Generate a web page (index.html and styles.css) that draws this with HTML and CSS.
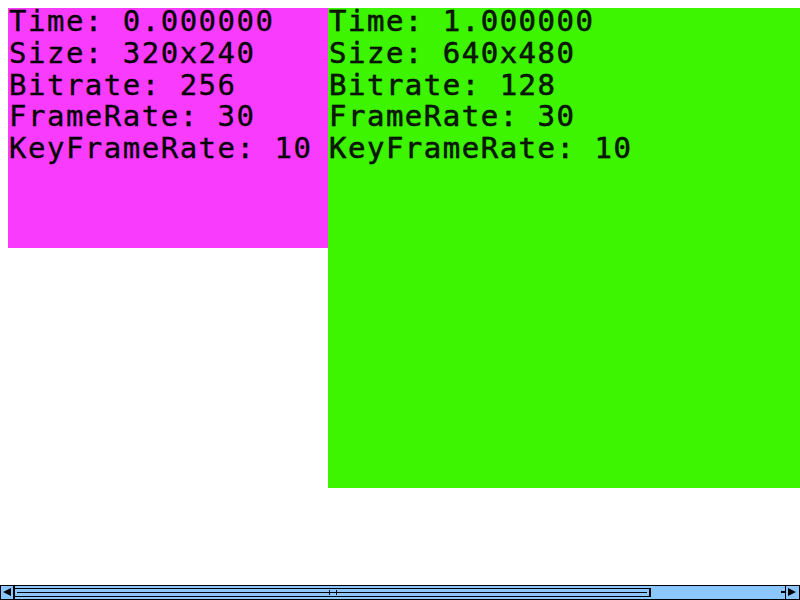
FILE: index.html
```html
<!DOCTYPE html>
<html>
<head>
<meta charset="utf-8">
<link rel="stylesheet" href="styles.css">
</head>
<body>
<div class="stage">
  <div class="frame frame-small">
    <div class="info">
      <div class="line">Time: 0.000000</div>
      <div class="line">Size: 320x240</div>
      <div class="line">Bitrate: 256</div>
      <div class="line">FrameRate: 30</div>
      <div class="line">KeyFrameRate: 10</div>
    </div>
  </div>
  <div class="frame frame-large">
    <div class="info blurry">
      <div class="line">Time: 1.000000</div>
      <div class="line">Size: 640x480</div>
      <div class="line">Bitrate: 128</div>
      <div class="line">FrameRate: 30</div>
      <div class="line">KeyFrameRate: 10</div>
    </div>
  </div>
</div>
<div class="hscroll">
  <div class="sb-btn sb-left"><span class="tri tri-left"></span></div>
  <div class="sb-track">
    <div class="sb-thumb">
      <div class="sb-mid"></div>
      <span class="grip grip-a"></span>
      <span class="grip grip-b"></span>
    </div>
  </div>
  <div class="sb-btn sb-right"><span class="stub"></span><span class="tri tri-right"></span></div>
</div>
</body>
</html>
```
FILE: styles.css
```css
html {
  overflow: hidden;
}
body {
  margin: 8px 0 0 8px;
  background: #ffffff;
  font-family: "DejaVu Sans Mono", monospace;
}
.stage {
  display: flex;
  align-items: flex-start;
}
.frame-small {
  flex: none;
  width: 320px;
  height: 240px;
  background: #f83bfc;
}
.frame-large {
  flex: 1;
  min-width: 0;
  height: 480px;
  background: #3ef500;
}
.info {
  padding-left: 1px;
  font-size: 29px;
  letter-spacing: 1.5px;
  color: #000;
  white-space: nowrap;
  -webkit-text-stroke: 0.3px #000;
}
.line {
  line-height: 26px;
  margin-bottom: 5.75px;
}
.blurry {
  color: #0a1a00;
  text-shadow: 0 0 1px rgba(0,0,0,0.6);
}
.hscroll {
  position: fixed;
  left: 0;
  bottom: 0;
  width: 800px;
  height: 15px;
  box-sizing: border-box;
  border-top: 1px solid #000;
  border-bottom: 1px solid #000;
  background: #8cc6ff;
  display: flex;
}
.sb-btn {
  width: 15px;
  flex: none;
  position: relative;
  box-sizing: border-box;
}
.sb-left {
  border-left: 1px solid #000;
  border-right: 2px solid #000;
}
.sb-right {
  border-left: 1px solid #000;
  border-right: 1px solid #000;
}
.tri {
  position: absolute;
  top: 2px;
  width: 0;
  height: 0;
  border-top: 4.5px solid transparent;
  border-bottom: 4.5px solid transparent;
}
.tri-left {
  left: 2px;
  border-right: 8px solid #000;
}
.tri-right {
  left: 2px;
  border-left: 8px solid #000;
}
.stub {
  position: absolute;
  left: -5px;
  top: 5px;
  width: 4px;
  height: 2px;
  background: #000;
}
.sb-track {
  flex: 1;
  position: relative;
}
.sb-thumb {
  position: absolute;
  left: 0;
  top: 2px;
  width: 636px;
  height: 9px;
  box-sizing: border-box;
  border-top: 1px solid #000;
  border-bottom: 1px solid #000;
  border-right: 2px solid #000;
}
.sb-mid {
  position: absolute;
  left: 2px;
  right: 2px;
  top: 3px;
  height: 1px;
  background: #000;
}
.grip {
  position: absolute;
  top: 1px;
  width: 1px;
  height: 5px;
  background: #000;
}
.grip-a { left: 314px; }
.grip-b { left: 321px; }
```
